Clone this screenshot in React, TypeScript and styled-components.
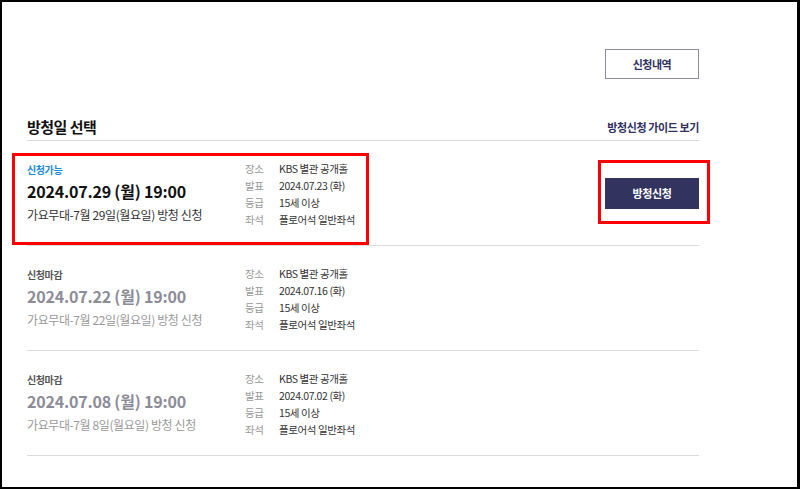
import styled, { createGlobalStyle } from "styled-components";

type Session = {
  open: boolean;
  date: string;
  title: string;
  notice: string;
};

const sessions: Session[] = [
  {
    open: true,
    date: "2024.07.29 (월) 19:00",
    title: "가요무대-7월 29일(월요일) 방청 신청",
    notice: "2024.07.23 (화)",
  },
  {
    open: false,
    date: "2024.07.22 (월) 19:00",
    title: "가요무대-7월 22일(월요일) 방청 신청",
    notice: "2024.07.16 (화)",
  },
  {
    open: false,
    date: "2024.07.08 (월) 19:00",
    title: "가요무대-7월 8일(월요일) 방청 신청",
    notice: "2024.07.02 (화)",
  },
];

const App = () => {
  return (
    <Frame>
      <GlobalStyle />
      <Content>
        <TopBar>
          <OutlineBtn>신청내역</OutlineBtn>
        </TopBar>
        <Header>
          <Heading>방청일 선택</Heading>
          <GuideLink>방청신청 가이드 보기</GuideLink>
        </Header>
        {sessions.map((s) => (
          <Row key={s.date}>
            <Main>
              <Status $open={s.open}>{s.open ? "신청가능" : "신청마감"}</Status>
              <DateText $open={s.open}>{s.date}</DateText>
              <Title $open={s.open}>{s.title}</Title>
              {s.open && <Highlight $left={-15} $top={12} $w={357} $h={92} />}
            </Main>
            <Info>
              <dt>장소</dt>
              <dd>KBS 별관 공개홀</dd>
              <dt>발표</dt>
              <dd>{s.notice}</dd>
              <dt>등급</dt>
              <dd>15세 이상</dd>
              <dt>좌석</dt>
              <dd>플로어석 일반좌석</dd>
            </Info>
            <Action>
              {s.open && (
                <BtnWrap>
                  <ApplyBtn>방청신청</ApplyBtn>
                  <Highlight $left={-7} $top={-18} $w={112} $h={64} />
                </BtnWrap>
              )}
            </Action>
          </Row>
        ))}
      </Content>
    </Frame>
  );
};

export default App;

const GlobalStyle = createGlobalStyle`
  html, body {
    margin: 0;
    padding: 0;
    background: #fff;
  }
  body {
    font-family: "Noto Sans CJK KR", "Noto Sans", sans-serif;
  }
`;

const Frame = styled.div`
  box-sizing: border-box;
  width: 800px;
  height: 489px;
  border: 2px solid #000;
  border-right-width: 3px;
  background: #fff;
  overflow: hidden;
`;

const Content = styled.div`
  width: 672px;
  margin-left: 25px;
`;

const TopBar = styled.div`
  display: flex;
  justify-content: flex-end;
  padding-top: 47px;
`;

const OutlineBtn = styled.button`
  box-sizing: border-box;
  width: 94px;
  height: 30px;
  border: 1px solid #8b8ba3;
  background: #fff;
  color: #2f3060;
  font-family: inherit;
  font-size: 11px;
  font-weight: 700;
  letter-spacing: -0.5px;
  padding: 0;
`;

const Header = styled.div`
  display: flex;
  justify-content: space-between;
  align-items: flex-end;
  height: 62px;
  padding-bottom: 3px;
  box-sizing: border-box;
  border-bottom: 1px solid #dcdcdc;
`;

const Heading = styled.h2`
  margin: 0;
  font-size: 15px;
  line-height: 20px;
  font-weight: 700;
  color: #111;
  letter-spacing: -0.5px;
`;

const GuideLink = styled.a`
  font-size: 11px;
  line-height: 20px;
  font-weight: 700;
  color: #2f3060;
  letter-spacing: -0.4px;
`;

const Row = styled.div`
  display: grid;
  grid-template-columns: 218px 1fr 94px;
  height: 105px;
  box-sizing: border-box;
  border-bottom: 1px solid #dcdcdc;
`;

const Main = styled.div`
  position: relative;
  padding-top: 22px;
`;

const Status = styled.div<{ $open: boolean }>`
  font-size: 10px;
  line-height: 14px;
  font-weight: 700;
  letter-spacing: -0.4px;
  color: ${(p) => (p.$open ? "#1a8ad6" : "#555")};
`;

const DateText = styled.div<{ $open: boolean }>`
  margin-top: 3px;
  font-size: 16px;
  line-height: 22px;
  font-weight: 700;
  letter-spacing: -0.2px;
  color: ${(p) => (p.$open ? "#111" : "#8c8c98")};
`;

const Title = styled.div<{ $open: boolean }>`
  margin-top: 4px;
  font-size: 12px;
  line-height: 18px;
  letter-spacing: -0.4px;
  color: ${(p) => (p.$open ? "#333" : "#999")};
`;

const Info = styled.dl`
  display: grid;
  grid-template-columns: 34px 1fr;
  grid-auto-rows: 17px;
  align-content: start;
  margin: 0;
  padding-top: 20px;
  font-size: 10.5px;
  letter-spacing: -0.4px;
  dt {
    color: #999;
  }
  dd {
    margin: 0;
    color: #333;
  }
`;

const Action = styled.div`
  display: flex;
  align-items: center;
`;

const BtnWrap = styled.div`
  position: relative;
  display: flex;
`;

const ApplyBtn = styled.button`
  width: 94px;
  height: 31px;
  border: none;
  background: #33335f;
  color: #fff;
  font-family: inherit;
  font-size: 11px;
  font-weight: 700;
  letter-spacing: -0.4px;
  padding: 0;
`;

const Highlight = styled.div<{ $left: number; $top: number; $w: number; $h: number }>`
  position: absolute;
  left: ${(p) => p.$left}px;
  top: ${(p) => p.$top}px;
  width: ${(p) => p.$w}px;
  height: ${(p) => p.$h}px;
  box-sizing: border-box;
  border: 3px solid #f00;
  pointer-events: none;
`;
